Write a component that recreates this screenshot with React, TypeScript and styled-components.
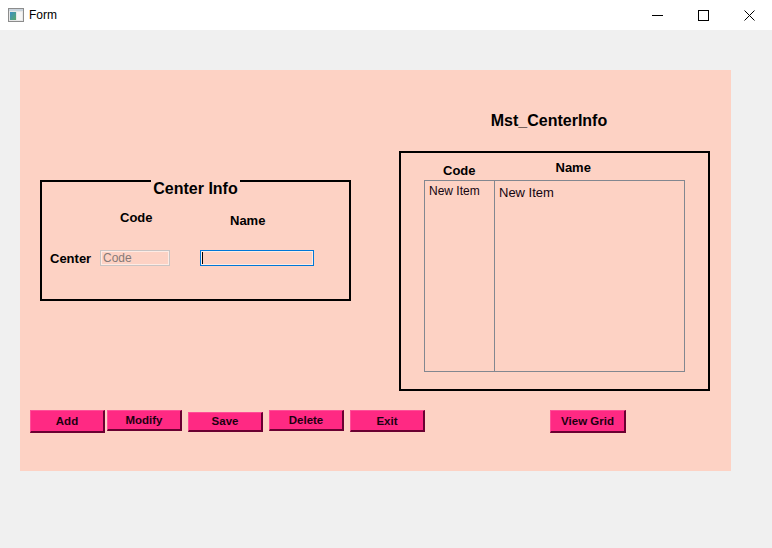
import React from "react";
import styled, { createGlobalStyle } from "styled-components";

const PINK = "#fdd2c4";

const GlobalStyle = createGlobalStyle`
  html, body { margin: 0; padding: 0; }
  body {
    background: #f0f0f0;
    width: 772px;
    height: 548px;
    overflow: hidden;
    font-family: "Liberation Sans", Arial, sans-serif;
  }
  * { box-sizing: border-box; }
`;

const Window = styled.div`
  width: 772px;
  height: 548px;
  display: flex;
  flex-direction: column;
  background: #f0f0f0;
`;

const TitleBar = styled.div`
  height: 30px;
  flex: 0 0 30px;
  background: #ffffff;
  display: flex;
  align-items: center;
`;

const AppIcon = styled.svg`
  margin-left: 8px;
  width: 16px;
  height: 14px;
  display: block;
`;

const TitleText = styled.span`
  margin-left: 5px;
  margin-top: -1px;
  font-size: 12px;
  line-height: 14px;
  color: #000;
`;

const Spacer = styled.div`
  flex: 1;
`;

const WinButton = styled.div`
  width: 46px;
  height: 30px;
  display: flex;
  align-items: center;
  justify-content: center;
`;

const ClientArea = styled.div`
  flex: 1;
  padding: 40px 0 0 20px;
`;

const Panel = styled.div`
  width: 711px;
  height: 401px;
  background: ${PINK};
  display: flex;
  flex-direction: column;
`;

const TopArea = styled.div`
  display: flex;
  align-items: flex-start;
  padding-left: 20px;
`;

const LeftCol = styled.div`
  margin-top: 110px;
  width: 311px;
`;

const GroupBox = styled.div`
  width: 311px;
  height: 121px;
  border: 2px solid #000;
`;

const GroupTitle = styled.div`
  margin: -2px auto 0;
  width: 89px;
  background: ${PINK};
  text-align: center;
  font-size: 16px;
  line-height: 18px;
  font-weight: bold;
  color: #000;
`;

const LabelRow = styled.div<{ $mt: number; $pl: number; $h: number }>`
  display: flex;
  align-items: flex-start;
  margin-top: ${(p) => p.$mt}px;
  padding-left: ${(p) => p.$pl}px;
  height: ${(p) => p.$h}px;
`;

const Label = styled.span<{ $mt?: number; $ml?: number; $w?: number }>`
  display: block;
  font-size: 13px;
  line-height: 15px;
  font-weight: bold;
  color: #000;
  margin-top: ${(p) => p.$mt ?? 0}px;
  margin-left: ${(p) => p.$ml ?? 0}px;
  ${(p) => (p.$w ? `width: ${p.$w}px;` : "")}
  white-space: nowrap;
`;

const TextBox = styled.div<{ $w: number; $ml?: number; $focused?: boolean }>`
  width: ${(p) => p.$w}px;
  height: 16px;
  margin-left: ${(p) => p.$ml ?? 0}px;
  border: 1px solid ${(p) => (p.$focused ? "#0078d7" : "#c9c4c3")};
  box-shadow: inset 0 0 0 1px rgba(255, 255, 255, 0.55);
  display: flex;
  align-items: flex-start;
`;

const Placeholder = styled.span`
  padding-left: 2px;
  font-size: 12px;
  line-height: 14px;
  color: #857a78;
`;

const Caret = styled.span`
  display: block;
  margin-left: 1px;
  margin-top: 1px;
  width: 1px;
  height: 12px;
  background: #000;
`;

const RightCol = styled.div`
  margin-left: 48px;
  width: 311px;
`;

const RightTitle = styled.div`
  margin-top: 41px;
  padding-right: 11px;
  font-size: 16px;
  line-height: 20px;
  font-weight: bold;
  text-align: center;
  color: #000;
`;

const GridBox = styled.div`
  margin-top: 20px;
  width: 311px;
  height: 240px;
  border: 2px solid #000;
`;

const ListBox = styled.div`
  margin-left: 23px;
  width: 261px;
  height: 192px;
  border: 1px solid #828790;
  display: flex;
`;

const ListColumn = styled.div<{ $w?: number; $divider?: boolean }>`
  ${(p) => (p.$w ? `width: ${p.$w}px;` : "flex: 1;")}
  height: 100%;
  ${(p) => (p.$divider ? "border-right: 1px solid #828790;" : "")}
  padding-left: 4px;
`;

const ListItem = styled.div<{ $size: number; $pt: number }>`
  font-size: ${(p) => p.$size}px;
  line-height: ${(p) => p.$size + 2}px;
  padding-top: ${(p) => p.$pt}px;
  color: #140510;
  white-space: nowrap;
`;

const ButtonRow = styled.div`
  display: flex;
  align-items: flex-start;
  margin-top: 19px;
  padding-left: 10px;
`;

const PinkButton = styled.button<{ $w: number; $h: number; $ml?: number; $mt?: number }>`
  width: ${(p) => p.$w}px;
  height: ${(p) => p.$h}px;
  margin: ${(p) => p.$mt ?? 0}px 0 0 ${(p) => p.$ml ?? 0}px;
  padding: 0;
  background: #ff2983;
  border-style: solid;
  border-width: 1px 2px 2px 1px;
  border-color: #ff4e98 #6a0031 #6a0031 #ff4e98;
  font-family: "Liberation Sans", Arial, sans-serif;
  font-size: 11.5px;
  font-weight: bold;
  color: #1c0010;
  display: flex;
  align-items: center;
  justify-content: center;
`;

export default function App() {
  return (
    <>
      <GlobalStyle />
      <Window>
        <TitleBar>
          <AppIcon viewBox="0 0 16 14">
            <defs>
              <linearGradient id="ig" x1="0" y1="0" x2="1" y2="1">
                <stop offset="0" stopColor="#3b8fc6" />
                <stop offset="1" stopColor="#5aa86a" />
              </linearGradient>
            </defs>
            <rect x="0.5" y="0.5" width="15" height="13" fill="#e8e8e8" stroke="#8c8c8c" />
            <rect x="1" y="1" width="14" height="2" fill="#c9d3dc" />
            <rect x="2" y="4" width="6" height="8" fill="url(#ig)" />
            <rect x="9" y="4" width="5" height="8" fill="#f6f6f6" />
          </AppIcon>
          <TitleText>Form</TitleText>
          <Spacer />
          <WinButton>
            <svg width="12" height="10" viewBox="0 0 12 10">
              <rect x="1" y="5" width="11" height="1" fill="#000" />
            </svg>
          </WinButton>
          <WinButton>
            <svg width="11" height="11" viewBox="0 0 11 11">
              <rect x="0.5" y="0.5" width="10" height="10" fill="none" stroke="#000" />
            </svg>
          </WinButton>
          <WinButton>
            <svg width="11" height="11" viewBox="0 0 11 11">
              <path d="M0.5 0.5 L10.5 10.5 M10.5 0.5 L0.5 10.5" stroke="#000" strokeWidth="1" />
            </svg>
          </WinButton>
        </TitleBar>
        <ClientArea>
          <Panel>
            <TopArea>
              <LeftCol>
                <GroupBox>
                  <GroupTitle>Center Info</GroupTitle>
                  <LabelRow $mt={12} $pl={78} $h={18}>
                    <Label>Code</Label>
                    <Label $ml={77.5} $mt={2.5}>
                      Name
                    </Label>
                  </LabelRow>
                  <LabelRow $mt={22} $pl={8} $h={16}>
                    <Label $w={50} $mt={1}>
                      Center
                    </Label>
                    <TextBox $w={70}>
                      <Placeholder>Code</Placeholder>
                    </TextBox>
                    <TextBox $w={114} $ml={30} $focused>
                      <Caret />
                    </TextBox>
                  </LabelRow>
                </GroupBox>
              </LeftCol>
              <RightCol>
                <RightTitle>Mst_CenterInfo</RightTitle>
                <GridBox>
                  <LabelRow $mt={0} $pl={42} $h={27}>
                    <Label $mt={10}>Code</Label>
                    <Label $ml={80} $mt={7}>
                      Name
                    </Label>
                  </LabelRow>
                  <ListBox>
                    <ListColumn $w={70} $divider>
                      <ListItem $size={12} $pt={2.5}>
                        New Item
                      </ListItem>
                    </ListColumn>
                    <ListColumn>
                      <ListItem $size={13} $pt={3.5}>
                        New Item
                      </ListItem>
                    </ListColumn>
                  </ListBox>
                </GridBox>
              </RightCol>
            </TopArea>
            <ButtonRow>
              <PinkButton $w={75} $h={23}>Add</PinkButton>
              <PinkButton $w={75} $h={21} $ml={2}>Modify</PinkButton>
              <PinkButton $w={75} $h={20} $ml={6} $mt={1.5}>Save</PinkButton>
              <PinkButton $w={75} $h={21} $ml={6}>Delete</PinkButton>
              <PinkButton $w={75} $h={22} $ml={6}>Exit</PinkButton>
              <PinkButton $w={76} $h={23} $ml={125}>View Grid</PinkButton>
            </ButtonRow>
          </Panel>
        </ClientArea>
      </Window>
    </>
  );
}
